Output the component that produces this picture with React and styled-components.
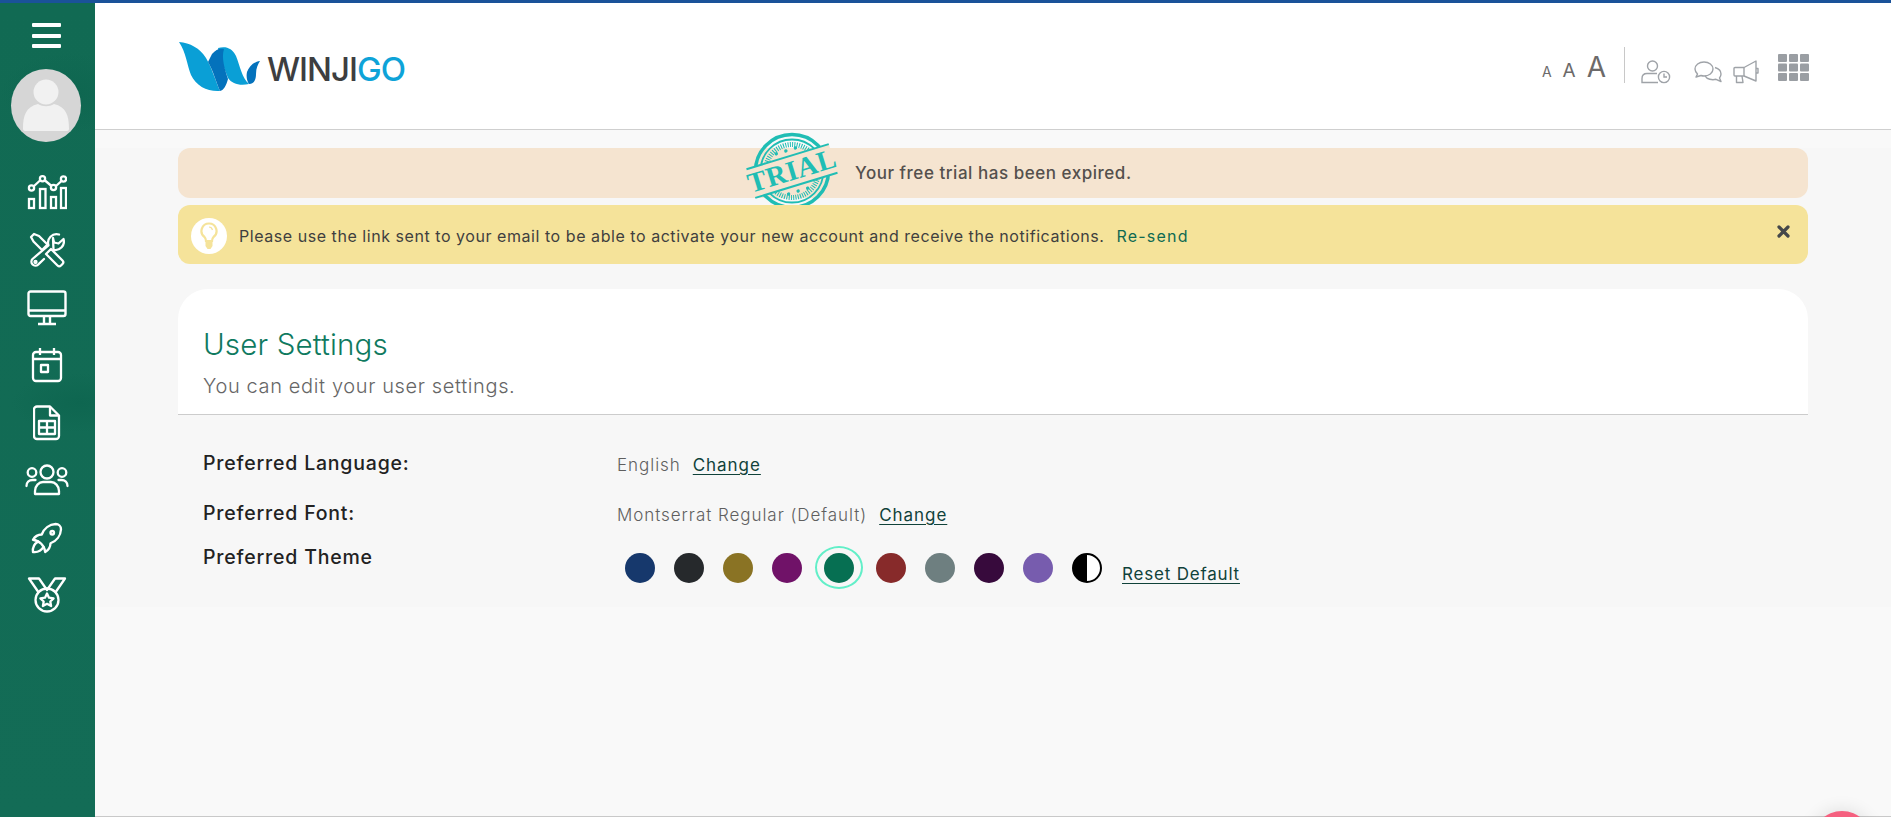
import React from 'react';
import styled, { createGlobalStyle } from 'styled-components';
import { TbRocket } from 'react-icons/tb';

const FONT = `Inter, "Open Sans", "Liberation Sans", sans-serif`;

const GlobalStyle = createGlobalStyle`
html, body {
  margin:0;
  padding:0;
  height:100%;
  overflow:hidden;
  background:#f9f9f9;
  font-family:${FONT};
}
`;

const Shell = styled.div`
display:flex;
height:817px;
box-sizing:border-box;
border-top:3px solid #1a5299;
position:relative;
overflow:hidden;
`;

const Sidebar = styled.aside`
width:95px;
flex:none;
display:flex;
flex-direction:column;
align-items:center;
padding:20px 2px 0 0;
box-sizing:border-box;
background:
  radial-gradient(ellipse 70px 40px at 70px 90px, #0e6650 0%, transparent 100%),
  radial-gradient(ellipse 70px 30px at 80px 400px, #0e6650 0%, transparent 100%),
  linear-gradient(180deg, #116a53 0%, #136c56 100%);
`;

const Burger = styled.button`
width:29px;
height:25px;
padding:0;
border:none;
background:none;
display:flex;
flex-direction:column;
justify-content:space-between;
span {
  display:block;
  height:4px;
  border-radius:1px;
  background:#fff;
}
`;

const Avatar = styled.div`
width:70px;
height:73px;
margin:21px 2px 0 0;
border-radius:50%;
background:#d6d6d6;
overflow:hidden;
svg { display:block; }
`;

const NavList = styled.nav`
margin-top:22px;
display:flex;
flex-direction:column;
align-items:center;
`;

const NavItem = styled.a`
height:57.5px;
width:93px;
display:flex;
align-items:center;
justify-content:center;
color:#fff;
`;

const Main = styled.div`
flex:1;
min-width:0;
display:flex;
flex-direction:column;
border-bottom:1px solid #c9c9c9;
`;

const Header = styled.header`
height:127px;
flex:none;
box-sizing:border-box;
background:#fff;
border-bottom:1px solid #cfcfcf;
padding:0 82px 0 83px;
display:flex;
align-items:center;
justify-content:space-between;
`;

const Logo = styled.div`
display:flex;
align-items:center;
gap:5px;
`;

const LogoText = styled.span`
font-size:33px;
font-weight:500;
letter-spacing:-1px;
color:#3d3e40;
margin-top:5px;
b {
  font-weight:500;
  color:#0ea3d8;
}
`;

const Tools = styled.div`
display:flex;
align-items:center;
margin-top:-3px;
height:36px;
`;

const FontSizes = styled.div`
display:flex;
align-items:baseline;
gap:11px;
padding-right:18px;
border-right:1px solid #c8c8c8;
height:36px;
line-height:40px;
`;

const SizeLetter = styled.span`
color:#6c6a6a;
font-size:${(p) => p.$size}px;
`;

const ToolIcon = styled.span`
display:flex;
margin-left:${(p) => p.$gap}px;
margin-top:${(p) => p.$top || 0}px;
`;

const Content = styled.main`
flex:none;
height:459px;
margin-top:18px;
padding:0 83px;
background:#f7f7f7;
display:flex;
flex-direction:column;
`;

const TrialBanner = styled.div`
height:50px;
flex:none;
box-sizing:border-box;
border-radius:12px;
background:#f5e4d0;
padding-left:572px;
display:flex;
align-items:center;
color:#54504d;
font-size:17px;
font-weight:450;
letter-spacing:0.53px;
`;

const Stamp = styled.svg`
flex:none;
margin:-4px 21px 0 0;
overflow:visible;
`;

const NoticeBanner = styled.div`
height:59px;
flex:none;
margin-top:7px;
box-sizing:border-box;
border-radius:12px;
background:#f5e39a;
padding:3px 20px 0 13px;
display:flex;
align-items:center;
color:#3f3f3f;
font-size:16px;
letter-spacing:0.55px;
`;

const BulbBadge = styled.span`
width:36px;
height:36px;
flex:none;
border-radius:50%;
background:#fff;
display:flex;
align-items:center;
justify-content:center;
margin-right:12px;
`;

const Resend = styled.a`
color:#0f6a52;
margin-left:12px;
letter-spacing:1.2px;
`;

const CloseMark = styled.span`
margin-left:auto;
display:flex;
margin-right:-2px;
margin-top:-10px;
`;

const Card = styled.section`
margin-top:25px;
height:126px;
flex:none;
box-sizing:border-box;
padding:36px 26px 0 25px;
background:#fff;
border-radius:30px 30px 0 0;
border-bottom:1px solid #cccccc;
`;

const Title = styled.h1`
margin:0;
font-size:29.5px;
line-height:38px;
font-weight:300;
letter-spacing:0.15px;
color:#0f7a60;
`;

const Subtitle = styled.p`
margin:10px 0 0;
font-size:20px;
line-height:26px;
font-weight:300;
letter-spacing:0.63px;
color:#666;
`;

const Settings = styled.div`
padding:0 26px 0 25px;
`;

const Row = styled.div`
display:grid;
grid-template-columns:414px 1fr;
align-items:start;
height:${(p) => p.$height}px;
padding-top:${(p) => p.$pad}px;
box-sizing:border-box;
`;

const Label = styled.div`
font-size:19.5px;
font-weight:500;
letter-spacing:0.8px;
color:#222;
line-height:24px;
`;

const Value = styled.div`
font-size:17px;
font-weight:300;
letter-spacing:0.95px;
color:#5f5f5f;
line-height:24px;
padding-top:2px;
display:flex;
`;

const ChangeLink = styled.a`
color:#10423a;
text-decoration:underline;
text-underline-offset:3px;
margin-left:12px;
font-weight:400;
`;

const Swatches = styled.div`
display:flex;
align-items:center;
margin-top:1px;
margin-left:-2px;
`;

const Swatch = styled.span`
width:${(p) => (p.$active ? 48 : 49)}px;
height:43px;
margin:0 ${(p) => (p.$active ? 3.5 : 0)}px;
box-sizing:border-box;
flex:none;
border-radius:50%;
display:flex;
align-items:center;
justify-content:center;
border:2px solid ${(p) => (p.$active ? '#62efc8' : 'transparent')};
&::before {
  content:'';
  box-sizing:border-box;
  width:30px;
  height:30px;
  border-radius:50%;
  background:${(p) => (p.$color ? p.$color : 'linear-gradient(90deg,#000 50%,#fff 50%)')};
  border:${(p) => (p.$color ? 'none' : '2px solid #000')};
}
`;

const ResetLink = styled.a`
color:#10423a;
text-decoration:underline;
text-underline-offset:3px;
font-size:17px;
letter-spacing:0.8px;
font-weight:400;
margin:13px 0 0 11px;
`;

const ChatBubble = styled.div`
position:absolute;
right:19px;
bottom:-54px;
width:60px;
height:60px;
border-radius:50%;
background:#f5607f;
box-shadow:0 0 18px rgba(0,0,0,0.12);
`;

const ChartIcon = () => (
  <svg width="40" height="36" viewBox="0 0 40 36" fill="none" stroke="#fff" strokeWidth="2.3">
    <rect x="2" y="24" width="5" height="9" />
    <rect x="13" y="14" width="5.5" height="19" />
    <rect x="24" y="22" width="5" height="11" />
    <rect x="34" y="13" width="5" height="20" />
    <path d="M6.5 11.5 13 5.5M18 5.5l6.5 5.5M29 11l5.5-5" />
    <circle cx="4.5" cy="13" r="2.6" />
    <circle cx="15.5" cy="3.8" r="2.6" />
    <circle cx="26.5" cy="12.5" r="2.6" />
    <circle cx="36.5" cy="4" r="2.6" />
  </svg>
);

const ToolsIcon = () => (
  <svg width="36" height="36" viewBox="0 0 36 36" fill="none" stroke="#fff" strokeWidth="2.3" strokeLinejoin="round" strokeLinecap="round">
    <path d="M2 5l3-3 5 2 8.5 8.500L13 18 4.500 9.500z" />
    <path d="M17 22l5-5 11.500 11.500a2.500 2.500 0 0 1 0 3.500l-1.500 1.500a2.500 2.500 0 0 1-3.500 0z" />
    <path d="M30 2.500a8.500 8.500 0 0 0-10.500 10.800L3.500 27a4 4 0 0 0 5.600 5.700L15 27" />
    <path d="M24.500 17.800A8.500 8.500 0 0 0 34.500 7l-5 4.500-4.500-1-1-4.500z" />
    <circle cx="6.500" cy="30" r="1" />
  </svg>
);

const MonitorIcon = () => (
  <svg width="40" height="36" viewBox="0 0 40 36" fill="none" stroke="#fff" strokeWidth="2.4" strokeLinejoin="round">
    <rect x="1.5" y="1.5" width="37" height="24.5" rx="2" />
    <path d="M1.5 20.5h37M17 26v7M23 26v7M11 34h18" />
  </svg>
);

const CalendarIcon = () => (
  <svg width="32" height="36" viewBox="0 0 32 36" fill="none" stroke="#fff" strokeWidth="2.3" strokeLinejoin="round">
    <rect x="2" y="5" width="28" height="29" rx="3" />
    <path d="M2 12h28M9 1v7M23 1v7" />
    <rect x="10" y="18" width="7" height="7" />
  </svg>
);

const SheetIcon = () => (
  <svg width="28" height="36" viewBox="0 0 28 36" fill="none" stroke="#fff" strokeWidth="2.3" strokeLinejoin="round">
    <path d="M4 1.5h13l9 9V31a3 3 0 0 1-3 3H4a3 3 0 0 1-3-3V4.500a3 3 0 0 1 3-3z" />
    <path d="M17 1.500v9h9" />
    <rect x="6" y="16" width="16" height="13" />
    <path d="M6 22.500h16M14 16v13" />
  </svg>
);

const UsersIcon = () => (
  <svg width="44" height="32" viewBox="0 0 44 32" fill="none" stroke="#fff" strokeWidth="2.3" strokeLinecap="round" strokeLinejoin="round">
    <circle cx="22" cy="8" r="6.5" />
    <circle cx="7" cy="8.500" r="4.300" />
    <circle cx="37" cy="8.500" r="4.300" />
    <path d="M10 30h24v-3c0-5-4-9-8-9h-8c-4 0-8 4-8 9z" />
    <path d="M1.500 22c0-3.500 2.500-6 6-6h3M42.500 22c0-3.500-2.500-6-6-6h-3" />
  </svg>
);

const MedalIcon = () => (
  <svg width="40" height="36" viewBox="0 0 40 36" fill="none" stroke="#fff" strokeWidth="2.3" strokeLinejoin="round">
    <path d="M12 16 2 1.500h10L20 13l8-11.500h10L28 16" />
    <circle cx="20" cy="23" r="11.500" />
    <path d="m20 16.500 2 4.200 4.600.6-3.300 3.200.8 4.500-4.100-2.200-4.100 2.200.8-4.500-3.300-3.200 4.600-.6z" />
  </svg>
);

const UserClockIcon = () => (
  <svg width="30" height="24" viewBox="0 0 30 24" fill="none" stroke="#9fa3a8" strokeWidth="1.4">
    <circle cx="11.500" cy="6" r="5" />
    <path d="M16 13.500H6c-3 0-5 2-5 5v4h16" />
    <circle cx="23" cy="17" r="5.600" />
    <path d="M23 13.500V17h3" />
  </svg>
);

const ChatsIcon = () => (
  <svg width="28" height="22" viewBox="0 0 28 22" fill="none" stroke="#9fa3a8" strokeWidth="1.4" strokeLinejoin="round">
    <path d="M10 1C5 1 1 4 1 8c0 2 1 3.500 2.500 5L2 16l5-1.500c1 .3 2 .5 3 .5 5 0 9-3 9-7s-4-7-9-7z" />
    <path d="M21 6.500c3.500 1 6 3.400 6 6.500 0 1.500-.5 2.800-1.500 4l1.500 3.500-5-2.200c-4 1-9 0-11-3.500" />
  </svg>
);

const MegaphoneIcon = () => (
  <svg width="26" height="24" viewBox="0 0 26 24" fill="none" stroke="#9fa3a8" strokeWidth="1.4" strokeLinejoin="round">
    <path d="M2 7.500h9L23 1v20l-12-5H2a1 1 0 0 1-1-1V8.500a1 1 0 0 1 1-1z" />
    <path d="M11 7.500V16M3.500 16v6.500h6.500l-1-6.500M23 8.500h2V13h-2" />
  </svg>
);

const GridIcon = () => (
  <svg width="31" height="27" viewBox="0 0 31 27" fill="#9a9ea3">
    {[0, 11, 22].map((x) =>
      [0, 9.5, 19].map((y) => <rect key={`${x}-${y}`} x={x} y={y} width="9" height="8" rx="1" />)
    )}
  </svg>
);

const TrialStamp = () => (
  <Stamp width="84" height="84" viewBox="0 0 84 84">
    <g fill="none" stroke="#20bdb4">
      <circle cx="42" cy="42" r="36.500" strokeWidth="3.500" />
      <circle cx="42" cy="42" r="31.500" strokeWidth="1.800" />
      <circle cx="42" cy="42" r="26.500" strokeWidth="5" strokeDasharray="1 1.300" />
    </g>
    <g transform="rotate(-17 42 42)">
      <rect x="-1" y="27" width="86" height="30" fill="#f5e4d0" />
      <path d="M-1 27H85M-1 57H85" stroke="#20bdb4" strokeWidth="2" />
      <text x="42" y="51" textAnchor="middle" fontFamily='"Liberation Serif", serif' fontWeight="700" fontSize="28" fill="#20bdb4">TRIAL</text>
      <g fill="#20bdb4">
        {[32, 42, 52].map((x) => (
          <React.Fragment key={x}>
            <circle cx={x} cy="21" r="1.700" />
            <circle cx={x} cy="63" r="1.700" />
          </React.Fragment>
        ))}
      </g>
    </g>
  </Stamp>
);

const navIcons = [
  <ChartIcon />,
  <ToolsIcon />,
  <MonitorIcon />,
  <CalendarIcon />,
  <SheetIcon />,
  <UsersIcon />,
  <TbRocket size={42} strokeWidth={1.35} />,
  <MedalIcon />,
];

const themes = ['#16386c', '#26292c', '#8a7324', '#701268', '#066f52', '#872a2a', '#6e7f80', '#370a3c', '#775cae', null];

const App = () => {
  return (
    <>
      <GlobalStyle />
      <Shell>
        <Sidebar>
          <Burger>
            <span />
            <span />
            <span />
          </Burger>
          <Avatar>
            <svg width="70" height="73" viewBox="0 0 70 73">
              <circle cx="35" cy="23" r="12.500" fill="#f1f1f1" />
              <path d="M12 60c0-14 3-22 15-25 5 3 11 3 16 0 12 3 15 11 15 25 0 2-2 2-3 2H15c-1 0-3 0-3-2z" fill="#f1f1f1" />
            </svg>
          </Avatar>
          <NavList>
            {navIcons.map((icon, i) => (
              <NavItem key={i}>{icon}</NavItem>
            ))}
          </NavList>
        </Sidebar>
        <Main>
          <Header>
            <Logo>
              <svg width="84" height="52" viewBox="0 0 84 52">
                <path d="M1 2C12 3 22 8 28 18C34 28 38 42 42 51C30 52 18 46 13 35C9 25 8 12 1 2Z" fill="#0a9fd6" />
                <path d="M40 8C48 6 54 8 58 16C62 26 64 38 71 44C62 46 54 44 50 38C46 28 42 18 40 8Z" fill="#0a9fd6" />
                <path d="M34 14C38 9 42 8 46 9C43 18 47 30 50 39C48 46 46 50 42 51C38 42 35 30 30 22Z" fill="#0472bc" />
                <path d="M82 21C75 22 71 27 69 32C68 37 69 41 71 44C77 44 78 38 78 34C78 28 80 24 82 21Z" fill="#0472bc" />
              </svg>
              <LogoText>
                WINJI<b>GO</b>
              </LogoText>
            </Logo>
            <Tools>
              <FontSizes>
                <SizeLetter $size={14}>A</SizeLetter>
                <SizeLetter $size={19}>A</SizeLetter>
                <SizeLetter $size={28}>A</SizeLetter>
              </FontSizes>
              <ToolIcon $gap={16} $top={14}><UserClockIcon /></ToolIcon>
              <ToolIcon $gap={23} $top={14}><ChatsIcon /></ToolIcon>
              <ToolIcon $gap={11} $top={14}><MegaphoneIcon /></ToolIcon>
              <ToolIcon $gap={19} $top={5}><GridIcon /></ToolIcon>
            </Tools>
          </Header>
          <Content>
            <TrialBanner>
              <TrialStamp />
              Your free trial has been expired.
            </TrialBanner>
            <NoticeBanner>
              <BulbBadge>
                <svg width="18" height="28" viewBox="0 0 18 28" fill="none">
                  <path d="M9 1.500a7.500 7.500 0 0 1 4.500 13.500c-1 1-1.500 2-1.500 4H6c0-2-.5-3-1.500-4A7.500 7.500 0 0 1 9 1.500z" stroke="#f5e39a" strokeWidth="2.200" />
                  <path d="M5.500 20h7v4l-2 3h-3l-2-3z" fill="#f5e39a" />
                  <path d="M9 5c2 0 3 1 3.500 3" stroke="#f5e39a" strokeWidth="1.200" />
                </svg>
              </BulbBadge>
              Please use the link sent to your email to be able to activate your new account and receive the notifications.
              <Resend>Re-send</Resend>
              <CloseMark>
                <svg width="13" height="13" viewBox="0 0 13 13" stroke="#45484a" strokeWidth="3.200" strokeLinecap="round">
                  <path d="M2 2l9 9M11 2l-9 9" />
                </svg>
              </CloseMark>
            </NoticeBanner>
            <Card>
              <Title>User Settings</Title>
              <Subtitle>You can edit your user settings.</Subtitle>
            </Card>
            <Settings>
              <Row $height={64} $pad={36}>
                <Label>Preferred Language:</Label>
                <Value>
                  English
                  <ChangeLink>Change</ChangeLink>
                </Value>
              </Row>
              <Row $height={46} $pad={22}>
                <Label>Preferred Font:</Label>
                <Value>
                  Montserrat Regular (Default)
                  <ChangeLink>Change</ChangeLink>
                </Value>
              </Row>
              <Row $height={60} $pad={20}>
                <Label>Preferred Theme</Label>
                <Swatches>
                  {themes.map((color, i) => (
                    <Swatch key={i} $color={color} $active={i === 4} />
                  ))}
                  <ResetLink>Reset Default</ResetLink>
                </Swatches>
              </Row>
            </Settings>
          </Content>
        </Main>
        <ChatBubble />
      </Shell>
    </>
  );
};

export default App;
